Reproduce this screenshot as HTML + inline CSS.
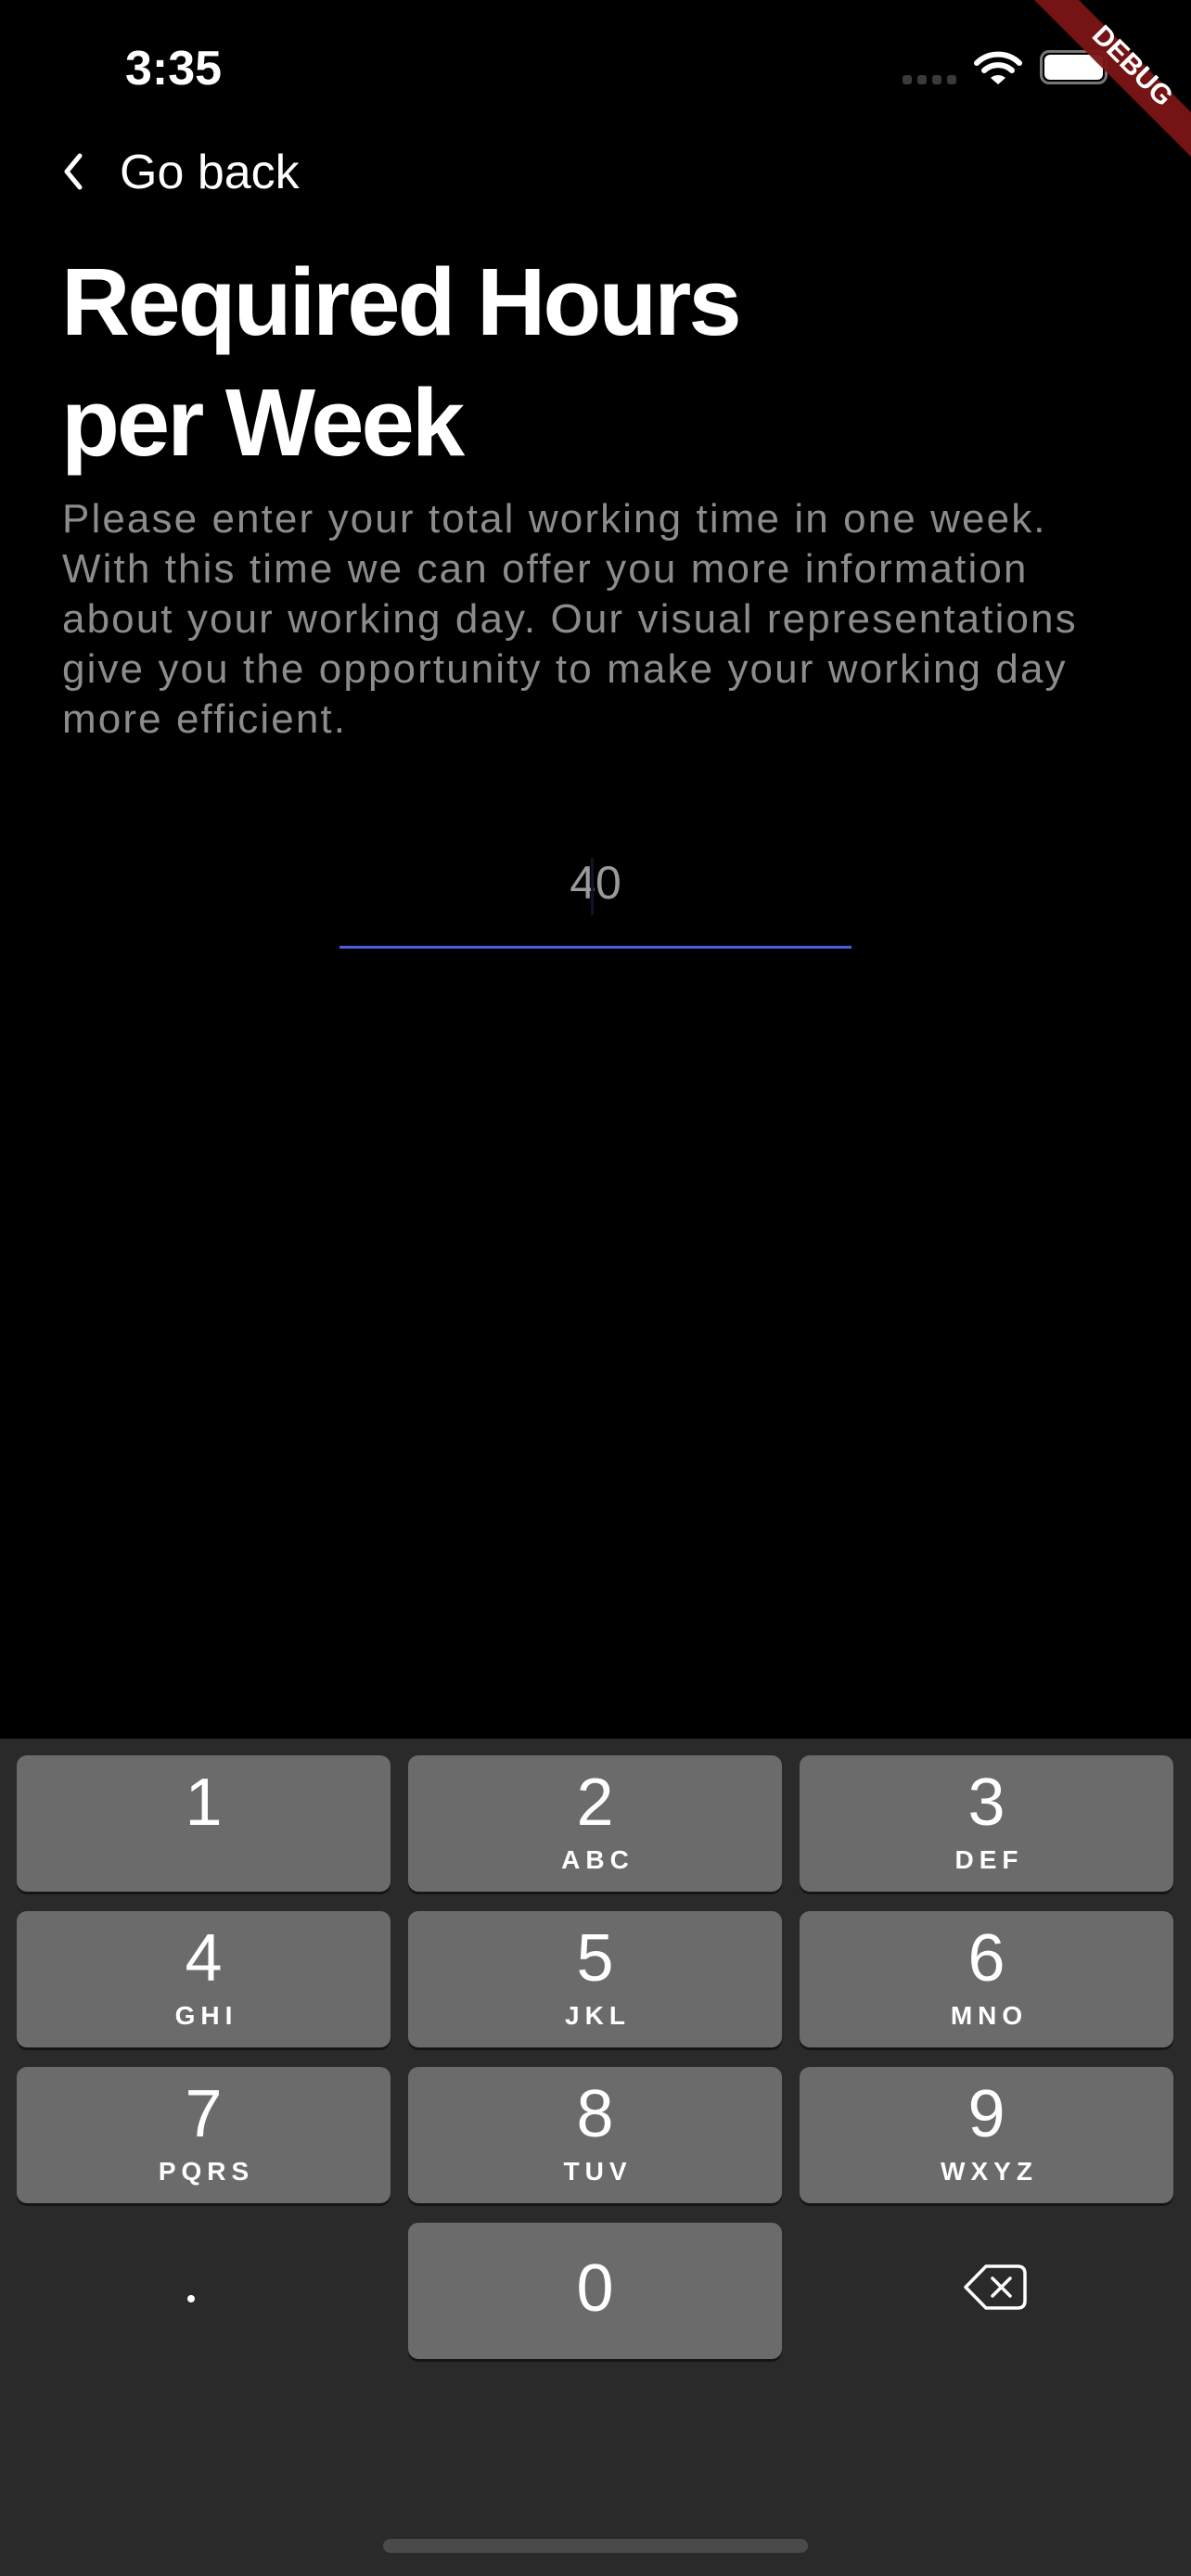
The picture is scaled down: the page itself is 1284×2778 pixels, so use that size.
<!DOCTYPE html>
<html><head><meta charset="utf-8"><style>
*{margin:0;padding:0;box-sizing:border-box}
body{width:1284px;height:2778px;background:#000;position:relative;overflow:hidden;font-family:"Liberation Sans",sans-serif;color:#fff}
.a{position:absolute;white-space:nowrap}
.p{left:67px;font-size:44px;line-height:54px;color:#8c8c8c;letter-spacing:2.1px}
.key{position:absolute;width:403px;height:147px;background:#6b6b6b;border-radius:11px;box-shadow:0 3px 0 #151515}
.d{position:absolute;left:0;right:0;text-align:center;font-size:72px;line-height:80px;top:11px}
.l{position:absolute;left:0;right:0;text-align:center;font-size:28px;line-height:30px;top:98px;font-weight:bold;letter-spacing:6px;text-indent:6px}
</style></head><body>
<div class="a" style="left:135px;top:44px;font-size:52px;line-height:60px;font-weight:bold">3:35</div>
<div class="a" style="left:973px;top:81px;width:10px;height:10px;border-radius:3px;background:#3a3a3a"></div>
<div class="a" style="left:989px;top:81px;width:10px;height:10px;border-radius:3px;background:#3a3a3a"></div>
<div class="a" style="left:1005px;top:81px;width:10px;height:10px;border-radius:3px;background:#3a3a3a"></div>
<div class="a" style="left:1021px;top:81px;width:10px;height:10px;border-radius:3px;background:#3a3a3a"></div>
<svg class="a" style="left:1050px;top:54px" width="52" height="38" viewBox="0 0 52 38">
<path d="M3 14 A33 33 0 0 1 49 14" stroke="#fff" stroke-width="6" fill="none" stroke-linecap="round"/>
<path d="M11 22 A22 22 0 0 1 41 22" stroke="#fff" stroke-width="6" fill="none" stroke-linecap="round"/>
<path d="M18 30 L26 37 L34 30 A12 12 0 0 0 18 30Z" fill="#fff"/></svg>
<div class="a" style="left:1121px;top:54px;width:73px;height:37px;border:3px solid #777;border-radius:10px"></div>
<div class="a" style="left:1126px;top:59px;width:63px;height:27px;background:#fff;border-radius:6px"></div>
<svg class="a" style="left:1100px;top:0" width="184" height="184" viewBox="1100 0 184 184">
<polygon points="1115,0 1163,0 1284,121 1284,169" fill="#7a1515" fill-opacity="0.95"/>
<text x="0" y="0" transform="translate(1222,70) rotate(45)" text-anchor="middle" font-family="Liberation Sans" font-weight="bold" font-size="30" fill="#fff" dy="11">DEBUG</text>
</svg>
<svg class="a" style="left:64px;top:164px" width="30" height="42" viewBox="0 0 30 42"><path d="M22 4 L8 21 L22 38" stroke="#fff" stroke-width="5" fill="none" stroke-linecap="round" stroke-linejoin="round"/></svg>
<div class="a" style="left:129px;top:156px;font-size:52px;line-height:60px">Go back</div>
<div class="a" style="left:66px;top:261px;font-size:103px;line-height:130px;font-weight:bold;letter-spacing:-3px">Required Hours<br>per Week</div>
<div class="a p" style="top:533px">Please enter your total working time in one week.</div>
<div class="a p" style="top:587px">With this time we can offer you more information</div>
<div class="a p" style="top:641px">about your working day. Our visual representations</div>
<div class="a p" style="top:695px">give you the opportunity to make your working day</div>
<div class="a p" style="top:749px">more efficient.</div>
<div class="a" style="left:542px;width:200px;text-align:center;top:922px;font-size:50px;line-height:60px;color:#9a9a9a">40</div>
<div class="a" style="left:637px;top:925px;width:3px;height:62px;background:#10142a"></div>
<div class="a" style="left:366px;top:1020px;width:552px;height:3px;background:#4b5ee2"></div>
<div class="a" style="left:0;top:1875px;width:1284px;height:903px;background:#2a2a2a"></div>
<div class="key" style="left:18px;top:1893px"><div class="d">1</div></div>
<div class="key" style="left:440px;top:1893px"><div class="d">2</div><div class="l">ABC</div></div>
<div class="key" style="left:862px;top:1893px"><div class="d">3</div><div class="l">DEF</div></div>
<div class="key" style="left:18px;top:2061px"><div class="d">4</div><div class="l">GHI</div></div>
<div class="key" style="left:440px;top:2061px"><div class="d">5</div><div class="l">JKL</div></div>
<div class="key" style="left:862px;top:2061px"><div class="d">6</div><div class="l">MNO</div></div>
<div class="key" style="left:18px;top:2229px"><div class="d">7</div><div class="l">PQRS</div></div>
<div class="key" style="left:440px;top:2229px"><div class="d">8</div><div class="l">TUV</div></div>
<div class="key" style="left:862px;top:2229px"><div class="d">9</div><div class="l">WXYZ</div></div>
<div class="key" style="left:440px;top:2397px"><div class="d" style="top:31px">0</div></div>
<div class="a" style="left:202px;top:2475px;width:8px;height:8px;border-radius:50%;background:#fff"></div>
<svg class="a" style="left:1036px;top:2440px" width="74" height="54" viewBox="1036 2440 74 54">
<path d="M1063 2444 H1097 Q1105 2444 1105 2452 V2481 Q1105 2489 1097 2489 H1063 L1041 2466.5 Z" stroke="#fff" stroke-width="3.5" fill="none" stroke-linejoin="round"/>
<path d="M1070 2457 L1089 2476 M1089 2457 L1070 2476" stroke="#fff" stroke-width="3.5" stroke-linecap="round"/>
</svg>
<div class="a" style="left:413px;top:2738px;width:458px;height:15px;border-radius:8px;background:#4a4a4a"></div>
</body></html>
